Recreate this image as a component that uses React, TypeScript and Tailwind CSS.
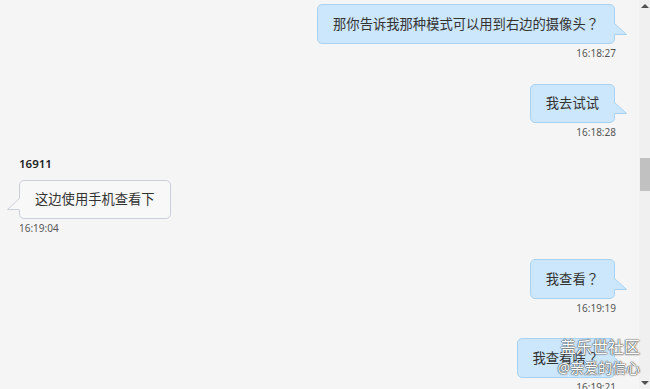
import React from "react";

type Msg = {
  side: "left" | "right";
  text: string;
  time: string;
  name?: string;
  gap: string;
};

const messages: Msg[] = [
  { side: "right", text: "那你告诉我那种模式可以用到右边的摄像头？", time: "16:18:27", gap: "mt-[4px]" },
  { side: "right", text: "我去试试", time: "16:18:28", gap: "mt-[24px]" },
  { side: "left", name: "16911", text: "这边使用手机查看下", time: "16:19:04", gap: "mt-[17px]" },
  { side: "right", text: "我查看？", time: "16:19:19", gap: "mt-[24px]" },
  { side: "right", text: "我查看啥？", time: "16:19:21", gap: "mt-[23px]" },
];

// full-width question mark drawn centred, like the reference font
function renderText(text: string) {
  return text.split(/(？)/).map((part, i) =>
    part === "？" ? (
      <span key={i} style={{ fontFamily: '"Noto Sans CJK JP", sans-serif' }}>
        ？
      </span>
    ) : (
      <span key={i}>{part}</span>
    )
  );
}

function Tail({ side }: { side: "left" | "right" }) {
  const isRight = side === "right";
  const fill = isRight ? "#cce6fb" : "#f8f8f8";
  const stroke = isRight ? "#a8d2f3" : "#c9d0da";
  return (
    <svg
      width="13"
      height="12"
      viewBox="0 0 13 12"
      className={`absolute bottom-[8px] ${isRight ? "left-full" : "right-full"}`}
    >
      {isRight ? (
        <>
          <polygon points="0,0 12.5,11.5 0,11.5" fill={fill} />
          <polyline points="0.5,0.5 12.5,11.5 1,11.5" fill="none" stroke={stroke} strokeWidth="1" />
        </>
      ) : (
        <>
          <polygon points="13,0 0.5,11.5 13,11.5" fill={fill} />
          <polyline points="12.5,0.5 0.5,11.5 12,11.5" fill="none" stroke={stroke} strokeWidth="1" />
        </>
      )}
    </svg>
  );
}

function Message({ msg }: { msg: Msg }) {
  const isRight = msg.side === "right";
  return (
    <div className={`flex flex-col ${isRight ? "items-end" : "items-start"} ${msg.gap}`}>
      {msg.name && (
        <div className="text-[11.5px] font-semibold leading-[16px] text-[#222] mb-[8px]">{msg.name}</div>
      )}
      <div
        className={`relative whitespace-nowrap rounded-[5px] border px-[15px] py-[9px] text-[13.3px] leading-[19px] text-[#333] ${
          isRight ? "bg-[#cce6fb] border-[#a8d2f3]" : "bg-[#f8f8f8] border-[#c9d0da]"
        }`}
      >
        {renderText(msg.text)}
        <Tail side={msg.side} />
      </div>
      <div className={`mt-[2px] text-[10px] leading-[14px] text-[#555] ${isRight ? "mr-[-1px]" : ""}`}>
        {msg.time}
      </div>
    </div>
  );
}

export default function App() {
  return (
    <div
      className="relative flex h-[389px] w-[650px] overflow-hidden bg-[#f5f5f5]"
      style={{ fontFamily: '"Noto Sans", "Noto Sans CJK SC", sans-serif' }}
    >
      {/* chat column */}
      <div className="flex flex-1 flex-col pl-[19px] pr-[24px]">
        {messages.map((m, i) => (
          <Message key={i} msg={m} />
        ))}
      </div>

      {/* scrollbar */}
      <div className="flex w-[11px] flex-col items-center bg-[#f0f0f0]">
        <div className="mt-[4px] h-0 w-0 border-x-[4px] border-b-[4px] border-x-transparent border-b-[#505050]" />
        <div className="mt-[150px] h-[33px] w-[10px] bg-[#c1c1c1]" />
        <div className="mt-auto mb-[4px] h-0 w-0 border-x-[4px] border-t-[4px] border-x-transparent border-t-[#505050]" />
      </div>

      {/* watermark */}
      <div className="pointer-events-none absolute right-[10px] top-[336px] flex flex-col items-end whitespace-nowrap text-white [text-shadow:0_0_1px_#444,0_0_1px_#444,0_0_2px_#666]">
        <div className="text-[16px] leading-[22px]">盖乐世社区</div>
        <div className="text-[14px] leading-[20px]">@亲爱的信心</div>
      </div>
    </div>
  );
}
